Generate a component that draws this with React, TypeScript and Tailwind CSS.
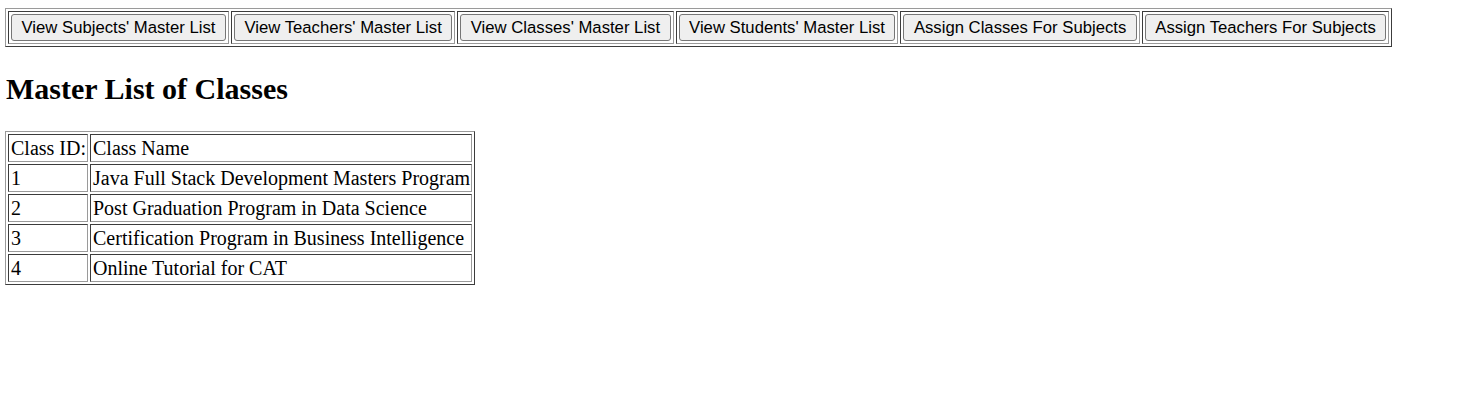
import React from 'react';

const navItems = [
  "View Subjects' Master List",
  "View Teachers' Master List",
  "View Classes' Master List",
  "View Students' Master List",
  'Assign Classes For Subjects',
  'Assign Teachers For Subjects',
];

const classes = [
  { id: 1, name: 'Java Full Stack Development Masters Program' },
  { id: 2, name: 'Post Graduation Program in Data Science' },
  { id: 3, name: 'Certification Program in Business Intelligence' },
  { id: 4, name: 'Online Tutorial for CAT' },
];

const outer =
  'border-separate border-spacing-[2px] border border-t-[#9a9a9a] border-l-[#9a9a9a] border-b-[#3c3c3c] border-r-[#3c3c3c]';
const cell =
  'border border-t-[#3c3c3c] border-l-[#3c3c3c] border-b-[#9a9a9a] border-r-[#9a9a9a]';
const dataCell = `${cell} pl-[2px] pr-px py-px`;

export default function App() {
  return (
    <div className="min-h-[407px] bg-white text-black font-['Liberation_Serif','Times_New_Roman',serif]">
      <div className="pt-[8px] pl-[5px]">
        <table className={outer}>
          <tbody>
            <tr>
              {navItems.map((label) => (
                <td key={label} className={`${cell} p-[2px]`}>
                  <button className="h-[27px] px-[9.5px] bg-[#efefef] border border-[#767676] rounded-[3px] text-[16.7px] leading-[19px] text-black font-['Liberation_Sans',Arial,sans-serif]">
                    {label}
                  </button>
                </td>
              ))}
            </tr>
          </tbody>
        </table>
      </div>

      <h2 className="pl-[6px] mt-[25px] text-[30px] leading-[34px] font-bold">Master List of Classes</h2>

      <div className="pl-[5px] mt-[25px]">
        <table className={`${outer} text-[20px] leading-[24px]`}>
          <tbody>
            <tr>
              <td className={dataCell}>Class ID:</td>
              <td className={dataCell}>Class Name</td>
            </tr>
            {classes.map((c) => (
              <tr key={c.id}>
                <td className={dataCell}>{c.id}</td>
                <td className={dataCell}>{c.name}</td>
              </tr>
            ))}
          </tbody>
        </table>
      </div>
    </div>
  );
}
